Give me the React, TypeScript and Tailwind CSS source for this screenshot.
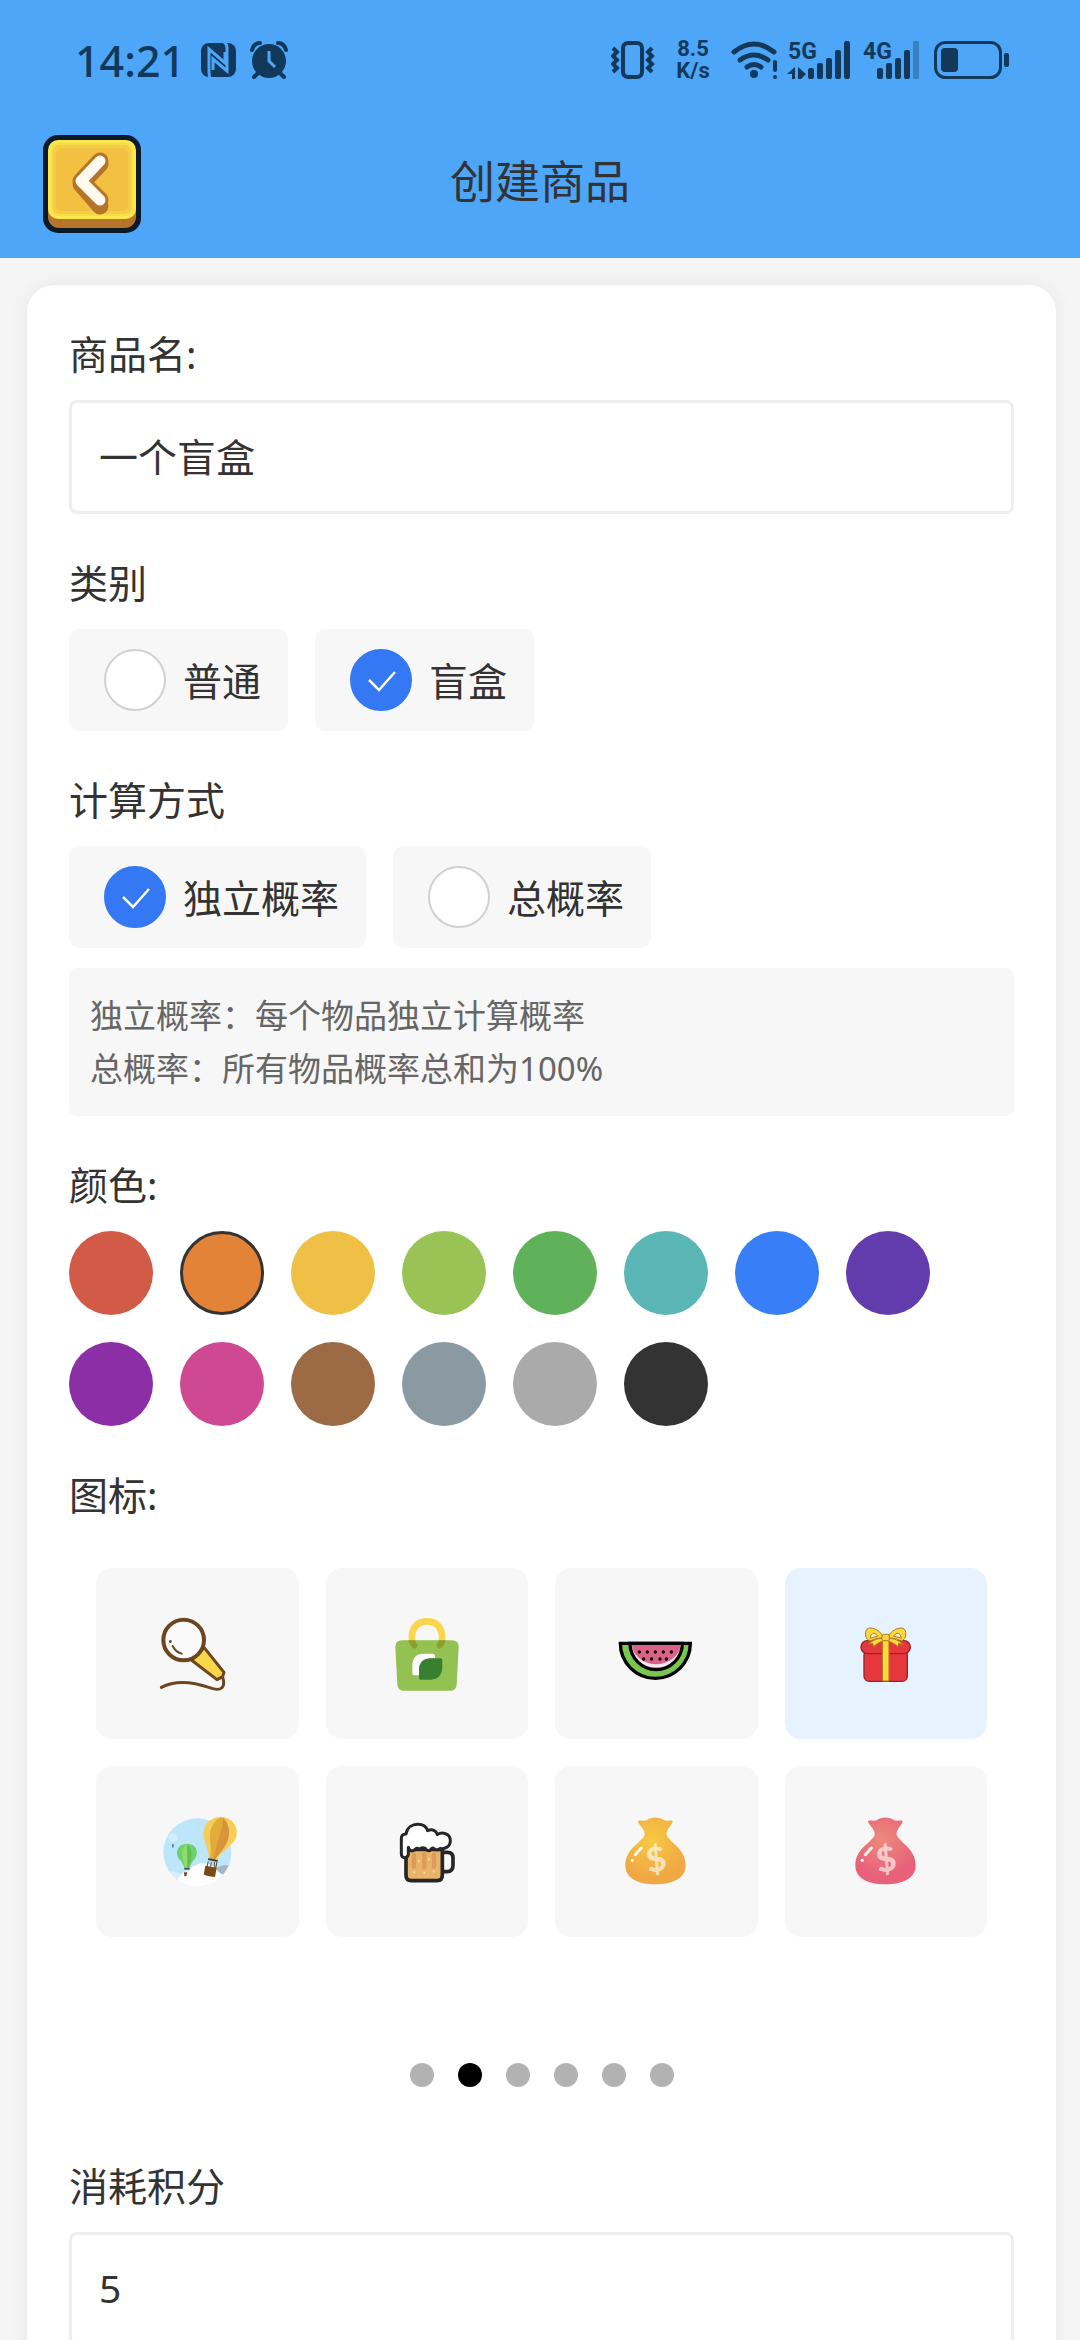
import { useState, type ReactNode } from "react";

type Option = { value: string; label: string };

const CATEGORIES: Option[] = [
  { value: "normal", label: "普通" },
  { value: "blindbox", label: "盲盒" },
];

const CALC_MODES: Option[] = [
  { value: "independent", label: "独立概率" },
  { value: "total", label: "总概率" },
];

const COLORS = [
  { name: "红色", className: "bg-[#d15b47]" },
  { name: "橙色", className: "bg-[#e38337]" },
  { name: "黄色", className: "bg-[#f0bf45]" },
  { name: "浅绿", className: "bg-[#99c455]" },
  { name: "绿色", className: "bg-[#5fb25a]" },
  { name: "青色", className: "bg-[#5ab7b5]" },
  { name: "蓝色", className: "bg-[#387ff7]" },
  { name: "靛蓝", className: "bg-[#623bac]" },
  { name: "紫色", className: "bg-[#8c2fa7]" },
  { name: "粉色", className: "bg-[#ce4992]" },
  { name: "棕色", className: "bg-[#9d6a46]" },
  { name: "蓝灰", className: "bg-[#8a99a2]" },
  { name: "灰色", className: "bg-[#aaaaaa]" },
  { name: "黑色", className: "bg-[#333333]" },
];

const PAGE_COUNT = 6;

// 状态栏图标
const NfcIcon = () => (
  <svg viewBox="0 0 35 36" className="w-[35px] h-[36px]">
    <rect x="0" y="1" width="35" height="34" rx="8" fill="currentColor" />
    <path d="M9 36 Q8 33 8 30 V7 L24 21 V10" fill="none" stroke="#4da6f8" strokeWidth="3" />
    <path d="M23 0 Q26 2 26 6 V29 L12 17 V28" fill="none" stroke="#4da6f8" strokeWidth="3" />
  </svg>
);

const AlarmIcon = () => (
  <svg viewBox="0 0 38 38" className="w-[38px] h-[38px]" fill="none" stroke="currentColor">
    <circle cx="19" cy="20" r="17" fill="currentColor" stroke="none" />
    <path d="M2 9 Q4 2 10 2 M36 9 Q34 2 28 2" strokeWidth="4" strokeLinecap="round" />
    <path d="M8 32 L4 36 M30 32 L34 36" strokeWidth="4" strokeLinecap="round" />
    <path d="M19 10 V20 L25 26" stroke="#4da6f8" strokeWidth="3" />
  </svg>
);

const VibrateIcon = () => (
  <svg viewBox="0 0 44 38" className="w-[44px] h-[38px]" fill="none" stroke="currentColor">
    <rect x="12" y="2" width="19" height="34" rx="5" strokeWidth="4" />
    <path
      d="M2 7 L6 11 L2 15 L6 19 L2 23 L6 27 L2 31 M41 7 L37 11 L41 15 L37 19 L41 23 L37 27 L41 31"
      strokeWidth="4"
    />
  </svg>
);

const WifiIcon = () => (
  <svg viewBox="0 0 48 38" className="w-[48px] h-[38px]" fill="none" stroke="currentColor">
    <path d="M3 11 Q23 -5 43 11 M9 19 Q23 9 37 19 M16 26 Q23 21 30 26" strokeWidth="5" strokeLinecap="round" />
    <circle cx="23" cy="33" r="4" fill="currentColor" stroke="none" />
    <path d="M44 21 V29" strokeWidth="4" strokeLinecap="round" />
    <circle cx="44" cy="36" r="2" fill="currentColor" stroke="none" />
  </svg>
);

const FiveGIcon = () => (
  <svg viewBox="0 0 63 38" className="w-[63px] h-[38px] overflow-visible font-['Roboto',sans-serif]" fill="currentColor">
    <text x="0" y="18" fontSize="23" fontWeight="700">
      5G
    </text>
    <path d="M7 26 V38 H4 V33 L-1 33 Z M10 26 L18 33 L13 38 H10 Z" />
    <rect x="20" y="27" width="6" height="11" rx="2" />
    <rect x="29" y="22" width="6" height="16" rx="2" />
    <rect x="38" y="17" width="6" height="21" rx="2" />
    <rect x="47" y="9" width="6" height="29" rx="2" />
    <rect x="56" y="0" width="6" height="38" rx="2" />
  </svg>
);

const FourGIcon = () => (
  <svg viewBox="0 0 57 38" className="w-[57px] h-[38px] overflow-visible font-['Roboto',sans-serif]" fill="currentColor">
    <text x="0" y="18" fontSize="23" fontWeight="700">
      4G
    </text>
    <rect x="14" y="27" width="6" height="11" rx="2" />
    <rect x="23" y="22" width="6" height="16" rx="2" />
    <rect x="32" y="17" width="6" height="21" rx="2" />
    <rect x="41" y="9" width="6" height="29" rx="2" />
    <rect x="50" y="0" width="6" height="38" rx="1" opacity="0.35" />
  </svg>
);

const BatteryIcon = () => (
  <svg viewBox="0 0 76 38" className="w-[76px] h-[38px]">
    <rect x="1.5" y="1.5" width="65" height="35" rx="10" fill="none" stroke="currentColor" strokeWidth="3" />
    <rect x="7" y="7" width="17" height="24" rx="4" fill="currentColor" />
    <rect x="70" y="12" width="5" height="14" rx="2" fill="currentColor" />
  </svg>
);

const BackIcon = () => (
  <svg viewBox="0 0 98 98" className="w-full h-full">
    <rect width="98" height="98" rx="15" fill="#0b1a2b" />
    <rect x="5" y="20" width="88" height="73" rx="11" fill="#b5742a" />
    <rect x="5" y="5" width="88" height="79" rx="10" fill="#fae74b" />
    <rect x="8" y="8" width="82" height="73" rx="8" fill="#f8db49" />
    <rect x="10" y="10" width="78" height="69" rx="7" fill="#f5cc45" />
    <rect x="13" y="13" width="72" height="63" rx="6" fill="#f3c141" />
    <path d="M57 29 L38 49 L57 71" fill="none" stroke="#b5742a" strokeWidth="17" strokeLinecap="round" strokeLinejoin="round" />
    <path d="M57 26 L38 46 L57 65" fill="none" stroke="#b5742a" strokeWidth="17" strokeLinecap="round" strokeLinejoin="round" />
    <path d="M57 26 L38 46 L57 65" fill="none" stroke="#fffaf0" strokeWidth="11" strokeLinecap="round" strokeLinejoin="round" />
  </svg>
);

// 商品图标
const MicIcon = () => (
  <svg viewBox="0 0 240 240" className="size-20" fill="none" stroke="#6b4620" strokeLinecap="round" strokeLinejoin="round">
    <path d="M13 220 C60 195 115 206 158 221 C195 235 206 218 197 190" strokeWidth="9" />
    <path d="M141 100 L201 175 L197 188 L180 197 L103 138 Z" fill="#f9d74a" strokeWidth="9" />
    <circle cx="80" cy="78" r="61" fill="#fafafa" strokeWidth="12" />
    <path d="M47 96 Q55 113 74 119" strokeWidth="6" />
    <path d="M40 82 V83" strokeWidth="8" />
  </svg>
);

const BagIcon = () => (
  <svg viewBox="0 0 240 240" className="size-20" fill="none">
    <path d="M82 94 C68 80 70 22 120 22 C170 22 172 80 158 94" stroke="#f9d64c" strokeWidth="20" strokeLinecap="round" />
    <path d="M45 79 H195 Q216 80 215 100 L209 212 Q207 230 190 230 H50 Q33 230 31 212 L25 100 Q24 80 45 79 Z" fill="#93c152" />
    <path d="M64 79 H84 Q86 86 92 94 Q92 104 82 104 Q70 100 64 79 Z M176 79 H156 Q154 86 148 94 Q148 104 158 104 Q170 100 176 79 Z" fill="#8d9f2b" />
    <path d="M80 184 Q76 184 76 178 V152 Q78 119 110 119 H136 Q144 119 144 127 V133 H130 Q98 135 96 165 V184 Z" fill="#fff" />
    <path d="M100 197 Q96 197 96 192 V168 Q97 134 132 133 H160 Q166 133 166 140 V160 Q164 196 132 197 Z" fill="#38802f" />
  </svg>
);

const WatermelonIcon = () => (
  <svg viewBox="0 0 240 240" className="size-20">
    <path d="M13 88 H223 A105 105 0 0 1 13 88 Z" fill="#79c74c" stroke="#000" strokeWidth="10" />
    <path d="M42 88 H199 A78 78 0 0 1 42 88 Z" fill="#fbe9ee" stroke="#000" strokeWidth="10" />
    <path d="M47 93 H194 A74 65 0 0 1 47 93 Z" fill="#dd6189" />
    {[70, 94, 118, 142, 166].map((x) => (
      <circle key={x} cx={x} cy="114" r="5" />
    ))}
    {[83, 107, 132, 151].map((x) => (
      <circle key={x} cx={x} cy="135" r="5" />
    ))}
  </svg>
);

const GiftIcon = () => (
  <svg viewBox="0 0 240 240" className="size-20" stroke="#96232a" strokeWidth="4" strokeLinejoin="round">
    <rect x="54" y="108" width="130" height="94" rx="15" fill="#e5373c" />
    <rect x="45" y="80" width="148" height="39" rx="19" fill="#e5373c" />
    <path d="M109 78 H129 V201 H109 Z" fill="#fbd83c" stroke="#a8741f" strokeWidth="3" />
    <g fill="#fbd83c" stroke="#b07a24" strokeWidth="3">
      <path d="M109 74 C94 72 78 80 67 91 L80 88 L83 98 C92 88 104 84 112 80 Z" />
      <path d="M129 74 C144 72 160 80 171 91 L158 88 L155 98 C146 88 134 84 126 80 Z" />
      <path d="M110 66 C98 42 64 34 60 51 C55 66 62 77 72 81 C84 74 96 72 110 72 Z" />
      <path d="M128 66 C140 42 174 34 178 51 C183 66 176 77 166 81 C154 74 142 72 128 72 Z" />
      <path d="M72 73 Q75 57 85 58 Q93 61 95 67 Q81 69 72 73 Z M166 73 Q163 57 153 58 Q145 61 143 67 Q157 69 166 73 Z" fill="#fff1dc" />
      <rect x="108" y="61" width="22" height="19" rx="5" />
    </g>
  </svg>
);

const BalloonIcon = () => (
  <svg viewBox="0 0 240 240" className="size-20">
    <defs>
      <clipPath id="sky">
        <circle cx="121" cy="121" r="102" />
      </clipPath>
    </defs>
    <g clipPath="url(#sky)">
      <rect width="240" height="240" fill="#bde6fb" />
      <circle cx="48" cy="77" r="13" fill="#d0effc" />
      <path d="M176 168 L198 160 H226 L200 196 Z" fill="#a4b7c2" />
      <ellipse cx="40" cy="196" rx="36" ry="18" fill="#d5f0fc" />
      <circle cx="138" cy="206" r="52" fill="#fff" />
      <circle cx="96" cy="212" r="34" fill="#fff" />
      <circle cx="178" cy="206" r="26" fill="#fff" />
    </g>
    <path d="M45 97 H51 L49 107 H46 Z" fill="#4a7690" />
    <path d="M90 95 C54 96 54 132 72 146 L82 166 H98 L108 146 C126 132 126 96 90 95 Z" fill="#6fd06e" />
    <path d="M90 95 C70 110 74 140 86 166 H95 C108 140 108 110 90 95 Z" fill="#92dc68" />
    <path d="M90 95 C91 120 91 140 91 166 H95 C108 140 108 110 90 95 Z" fill="#60bd5a" />
    <path d="M82 167 H98 V173 H82 Z" fill="#47543f" />
    <path d="M81 181 H91 L88 193 H82 Z" fill="#7a4b22" />
    <path d="M193 15 C158 14 132 42 141 80 C147 102 156 118 155 138 L181 142 C187 124 222 104 235 82 C248 48 230 18 193 15 Z" fill="#f5cd57" />
    <path d="M193 15 C168 24 154 56 160 92 Q164 116 159 138 L175 141 C192 116 222 92 215 50 Q210 26 193 15 Z" fill="#e0ac3c" />
    <path d="M198 16 C200 40 184 80 169 140 L175 141 C192 116 222 92 215 50 Q210 26 198 16 Z" fill="#d9943b" />
    <path d="M154 138 L183 144 L181 150 L153 144 Z" fill="#3f3f3c" />
    <path d="M154 148 L150 164 M163 150 L161 164 M172 150 V166 M180 150 L176 168" stroke="#54432e" strokeWidth="3" />
    <path d="M145 161 L179 167 L174 195 Q154 194 140 188 Z" fill="#7a4a16" />
  </svg>
);

const BeerIcon = () => (
  <svg viewBox="0 0 240 240" className="size-20" strokeLinejoin="round" strokeLinecap="round">
    <path d="M166 121 H182 Q198 121 198 138 V160 Q198 179 180 179 H166" fill="none" stroke="#262626" strokeWidth="11" />
    <path d="M57 112 H166 V190 Q166 206 150 206 H73 Q57 206 57 190 Z" fill="#e9b36a" stroke="#262626" strokeWidth="11" />
    <path d="M81 127 V164 M112 127 V166 M141 127 V164" stroke="#dc9c59" strokeWidth="13" />
    <path d="M82 180 V181 M112 182 V183 M140 178 V179 M96 146 V147 M126 142 V143" stroke="#fbdc94" strokeWidth="6" />
    <path
      d="M43 126 V80 Q42 67 57 66 C60 46 76 37 92 37 C108 37 118 44 122 56 C136 50 148 56 151 68 C164 58 190 64 190 86 C190 106 170 112 160 109 Q152 117 142 111 Q136 104 130 114 Q122 120 116 110 Q104 104 98 112 Q90 104 82 114 Q70 122 64 106 V128 Q62 137 53 137 Q43 137 43 126 Z"
      fill="#fff"
      stroke="#262626"
      strokeWidth="9"
    />
  </svg>
);

const MoneyBagIcon = ({ id, light, dark }: { id: string; light: string; dark: string }) => (
  <svg viewBox="0 0 240 240" className="size-20 font-['Lato',sans-serif]">
    <defs>
      <radialGradient id={id} gradientUnits="userSpaceOnUse" cx="108" cy="84" r="130">
        <stop offset="0" stopColor={light} />
        <stop offset="0.85" stopColor={dark} />
      </radialGradient>
    </defs>
    <path
      d="M66 30 C66 22 78 28 92 25 C104 14 132 14 144 25 C160 28 170 22 170 30 C164 42 150 54 152 68 C160 92 209 108 209 160 C209 200 170 217 118 217 C66 217 28 200 28 160 C28 108 78 92 86 68 C88 54 72 42 66 30 Z"
      fill={`url(#${id})`}
    />
    <path d="M58 128 L76 108" stroke="#fff" strokeWidth="9" strokeLinecap="round" opacity="0.9" />
    <circle cx="49" cy="145" r="5" fill="#fff" opacity="0.9" />
    <text x="121" y="178" textAnchor="middle" fontSize="102" fontWeight="900" fill="#fff" opacity="0.6" transform="rotate(-10 121 145)">
      $
    </text>
  </svg>
);

const ICONS: { name: string; icon: ReactNode }[] = [
  { name: "话筒", icon: <MicIcon /> },
  { name: "购物袋", icon: <BagIcon /> },
  { name: "西瓜", icon: <WatermelonIcon /> },
  { name: "礼物", icon: <GiftIcon /> },
  { name: "热气球", icon: <BalloonIcon /> },
  { name: "啤酒", icon: <BeerIcon /> },
  { name: "金色钱袋", icon: <MoneyBagIcon id="bag-gold" light="#f6ca42" dark="#f0a845" /> },
  { name: "红色钱袋", icon: <MoneyBagIcon id="bag-red" light="#ec8a7a" dark="#e8607a" /> },
];

const StatusBar = () => (
  <div className="flex items-center justify-between h-[110px] pt-[10px] pl-[75px] pr-[70px] text-[#12395b]">
    <div className="flex items-center">
      <span className="text-[43px] leading-none font-medium">14:21</span>
      <span className="flex items-center gap-[14px] ml-4">
        <NfcIcon />
        <AlarmIcon />
      </span>
    </div>
    <div className="flex items-center">
      <VibrateIcon />
      <div className="mx-[18px] w-[40px] font-['Roboto',sans-serif] text-[22px] leading-[22px] font-bold text-center">
        <div>8.5</div>
        <div>K/s</div>
      </div>
      <WifiIcon />
      <span className="flex gap-3 ml-[9px] mr-[14px]">
        <FiveGIcon />
        <FourGIcon />
      </span>
      <BatteryIcon />
    </div>
  </div>
);

const RadioGroup = ({
  name,
  options,
  value,
  onChange,
}: {
  name: string;
  options: Option[];
  value: string;
  onChange: (value: string) => void;
}) => (
  <div className="flex flex-wrap gap-[27px]">
    {options.map((opt) => (
      <label
        key={opt.value}
        className="flex items-center gap-[17px] h-[102px] pl-[35px] pr-[27px] rounded-[10px] bg-[#f7f7f7]"
      >
        <span className="relative size-[62px]">
          <input
            type="radio"
            name={name}
            value={opt.value}
            checked={value === opt.value}
            onChange={() => onChange(opt.value)}
            className="block appearance-none size-full rounded-full bg-white border-2 border-[#d1d1d1] checked:bg-[#3478f3] checked:border-[#3478f3]"
          />
          {value === opt.value && (
            <svg viewBox="0 0 62 62" className="absolute inset-0 pointer-events-none">
              <path d="M19 31 L29 41 L45 23" fill="none" stroke="#fff" strokeWidth="2.5" />
            </svg>
          )}
        </span>
        <span className="leading-[53px]">{opt.label}</span>
      </label>
    ))}
  </div>
);

const Field = ({ label, htmlFor, children }: { label: string; htmlFor?: string; children: ReactNode }) => (
  <div className="flex flex-col gap-5">
    {htmlFor ? (
      <label htmlFor={htmlFor} className="leading-[53px]">
        {label}
      </label>
    ) : (
      <div className="leading-[53px]">{label}</div>
    )}
    {children}
  </div>
);

const INPUT_CLASS =
  "w-full h-[114px] px-[27px] pb-1 rounded-lg border-3 border-[#eeeeee] bg-white text-[#333333] outline-none";

const App = () => {
  const [name, setName] = useState("一个盲盒");
  const [category, setCategory] = useState("blindbox");
  const [calcMode, setCalcMode] = useState("independent");
  const [color, setColor] = useState(1);
  const [icon, setIcon] = useState(3);
  const [page, setPage] = useState(1);
  const [points, setPoints] = useState("5");

  return (
    <div className="flex flex-col h-screen bg-[#f5f5f5] text-[39px] text-[#333333] font-['Noto_Sans','Noto_Sans_CJK_SC',sans-serif]">
      <header className="shrink-0 bg-[#4da6f8]">
        <StatusBar />
        <div className="grid grid-cols-[98px_1fr_98px] items-center h-[148px] px-[43px]">
          <button type="button" aria-label="返回" className="size-[98px]">
            <BackIcon />
          </button>
          <h1 className="text-[45px] leading-[56px] pb-1 text-center">创建商品</h1>
        </div>
      </header>

      <main className="flex-1 min-h-0 overflow-y-auto [scrollbar-width:none] pt-[27px] pb-[27px] pl-[27px] pr-6">
        <form className="flex flex-col gap-[42px] p-[42px] rounded-[27px] bg-white shadow-[0_0_20px_rgba(0,0,0,0.06)]">
          <Field label="商品名:" htmlFor="name">
            <input
              id="name"
              type="text"
              value={name}
              onChange={(e) => setName(e.target.value)}
              className={INPUT_CLASS}
            />
          </Field>

          <Field label="类别">
            <RadioGroup name="category" options={CATEGORIES} value={category} onChange={setCategory} />
          </Field>

          <Field label="计算方式">
            <RadioGroup name="calcMode" options={CALC_MODES} value={calcMode} onChange={setCalcMode} />
            <div className="p-[21px] rounded-lg bg-[#f7f7f7] text-[33px] leading-[53px] text-[#666666]">
              <p>独立概率：每个物品独立计算概率</p>
              <p>总概率：所有物品概率总和为100%</p>
            </div>
          </Field>

          {/* 颜色 */}
          <Field label="颜色:">
            <div className="flex flex-wrap gap-[27px]">
              {COLORS.map((c, i) => (
                <button
                  key={c.name}
                  type="button"
                  aria-label={c.name}
                  aria-pressed={color === i}
                  onClick={() => setColor(i)}
                  className={`size-[84px] rounded-full ${c.className} ${
                    color === i ? "border-3 border-[#333333]" : ""
                  }`}
                />
              ))}
            </div>
          </Field>

          {/* 图标 */}
          <Field label="图标:">
            <div className="flex flex-col">
              <div className="grid grid-cols-4 gap-[27px] p-[27px]">
                {ICONS.map((item, i) => (
                  <button
                    key={item.name}
                    type="button"
                    aria-label={item.name}
                    aria-pressed={icon === i}
                    onClick={() => setIcon(i)}
                    className={`flex items-center justify-center h-[171px] rounded-2xl ${
                      icon === i ? "bg-[#e6f2fe]" : "bg-[#f7f7f7]"
                    }`}
                  >
                    {item.icon}
                  </button>
                ))}
              </div>
              <div className="flex justify-center gap-6 pt-[99px] pb-[30px]">
                {Array.from({ length: PAGE_COUNT }, (_, i) => (
                  <button
                    key={i}
                    type="button"
                    aria-label={`第${i + 1}页`}
                    onClick={() => setPage(i)}
                    className={`size-6 rounded-full ${page === i ? "bg-black" : "bg-[#b2b2b2]"}`}
                  />
                ))}
              </div>
            </div>
          </Field>

          <Field label="消耗积分" htmlFor="points">
            <input
              id="points"
              type="text"
              inputMode="numeric"
              value={points}
              onChange={(e) => setPoints(e.target.value)}
              className={INPUT_CLASS}
            />
          </Field>
        </form>
      </main>
    </div>
  );
};

export default App;
